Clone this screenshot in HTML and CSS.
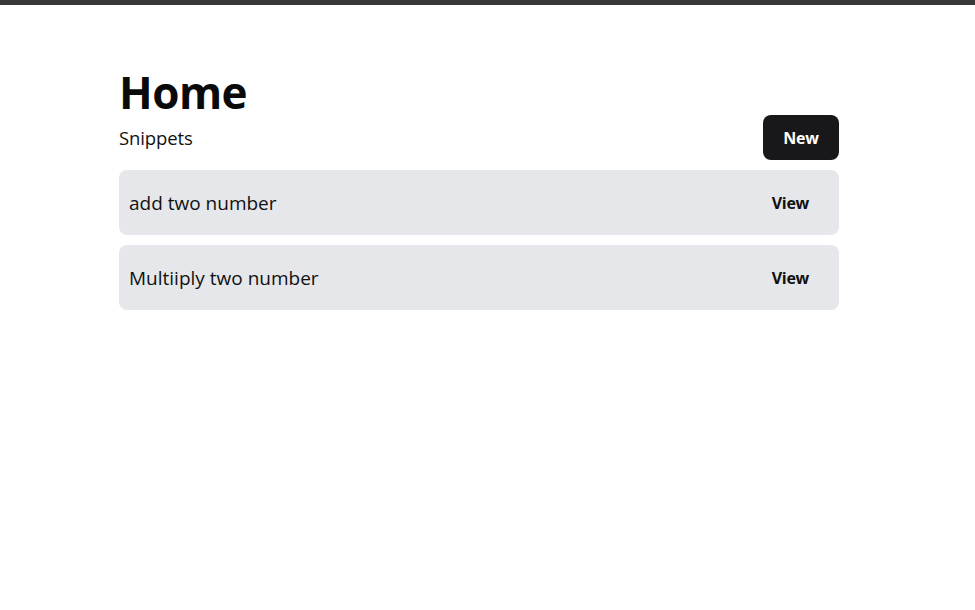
FILE: index.html
```html
<!DOCTYPE html>
<html>
<head>
<meta charset="utf-8">
<link rel="stylesheet" href="styles.css">
</head>
<body>
<div class="topbar"></div>
<main class="container">
  <h1 class="title">Home</h1>
  <div class="header-row">
    <span class="subtitle">Snippets</span>
    <button class="btn-new">New</button>
  </div>
  <div class="list">
    <div class="card">
      <span class="card-title">add two number</span>
      <a class="btn-view">View</a>
    </div>
    <div class="card">
      <span class="card-title">Multiiply two number</span>
      <a class="btn-view">View</a>
    </div>
  </div>
</main>
</body>
</html>
```
FILE: styles.css
```css
html, body {
  margin: 0;
  padding: 0;
  background: #fff;
  font-family: "Open Sans", "Noto Sans", sans-serif;
  color: #111;
}
.topbar {
  height: 5px;
  background: #383838;
}
.container {
  width: 720px;
  margin-left: 119px;
  padding-top: 59px;
}
.title {
  margin: 0;
  font-size: 44px;
  font-weight: 700;
  line-height: 56px;
  color: #0a0a0a;
  letter-spacing: -0.5px;
}
.header-row {
  display: flex;
  justify-content: space-between;
  align-items: center;
  margin-top: -5px;
}
.subtitle {
  font-size: 18.5px;
  letter-spacing: -0.1px;
}
.btn-new {
  font-family: inherit;
  background: #18181b;
  color: #fff;
  border: none;
  border-radius: 8px;
  width: 76px;
  height: 45px;
  font-size: 16px;
  font-weight: 700;
  letter-spacing: -0.3px;
}
.list {
  display: flex;
  flex-direction: column;
  gap: 10px;
  margin-top: 10px;
}
.card {
  display: flex;
  justify-content: space-between;
  align-items: center;
  height: 65px;
  background: #e5e7eb;
  border-radius: 8px;
  padding: 0 29px 0 10px;
}
.card-title {
  font-size: 19px;
  letter-spacing: 0;
}
.btn-view {
  font-size: 16px;
  font-weight: 700;
  letter-spacing: -0.3px;
  margin-right: 1px;
}
```
